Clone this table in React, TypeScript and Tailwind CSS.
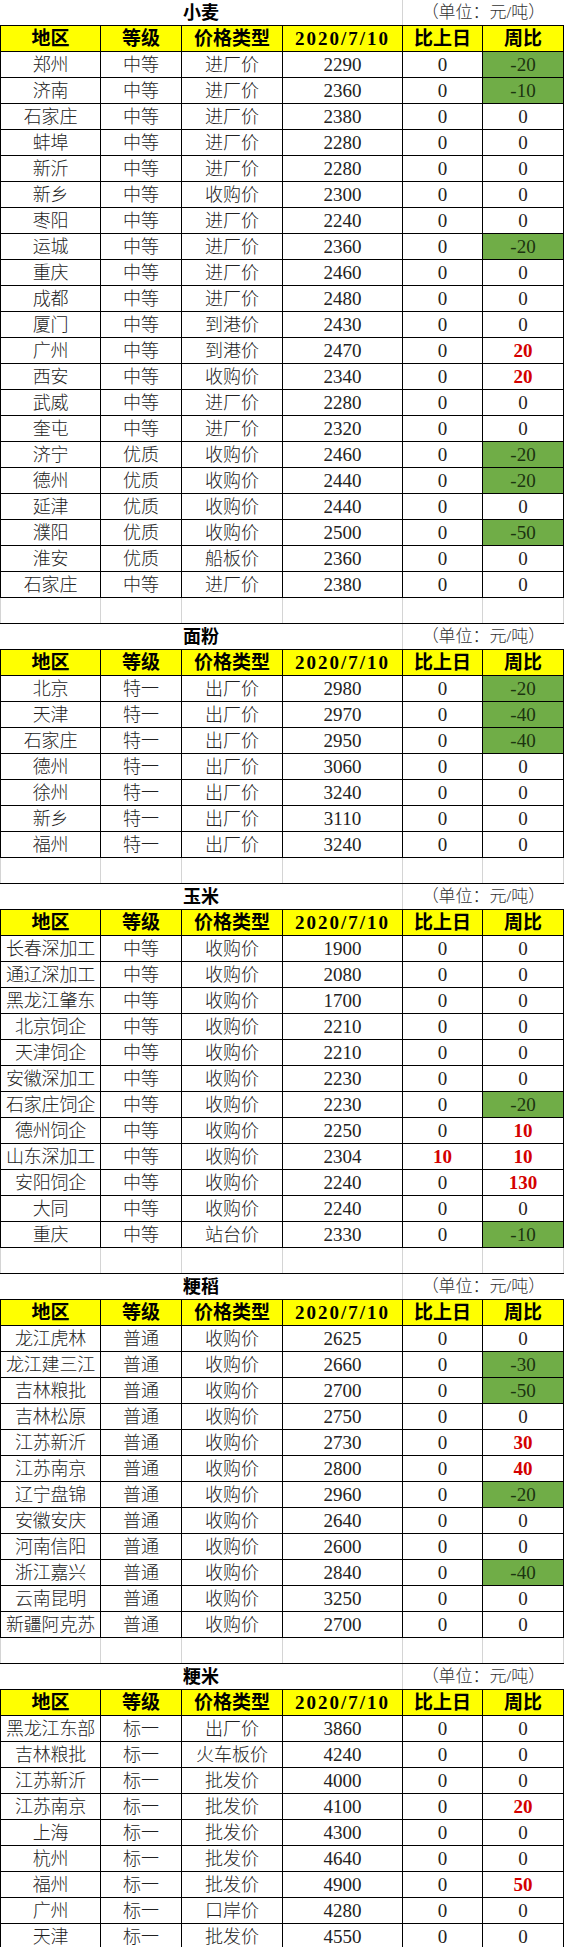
import React from "react";

type Row = [string, string, string, string, string, string];

type Section = { title: string; rows: Row[] };

const sections: Section[] = [
  {
    title: "小麦",
    rows: [
      ["郑州", "中等", "进厂价", "2290", "0", "-20"],
      ["济南", "中等", "进厂价", "2360", "0", "-10"],
      ["石家庄", "中等", "进厂价", "2380", "0", "0"],
      ["蚌埠", "中等", "进厂价", "2280", "0", "0"],
      ["新沂", "中等", "进厂价", "2280", "0", "0"],
      ["新乡", "中等", "收购价", "2300", "0", "0"],
      ["枣阳", "中等", "进厂价", "2240", "0", "0"],
      ["运城", "中等", "进厂价", "2360", "0", "-20"],
      ["重庆", "中等", "进厂价", "2460", "0", "0"],
      ["成都", "中等", "进厂价", "2480", "0", "0"],
      ["厦门", "中等", "到港价", "2430", "0", "0"],
      ["广州", "中等", "到港价", "2470", "0", "20"],
      ["西安", "中等", "收购价", "2340", "0", "20"],
      ["武威", "中等", "进厂价", "2280", "0", "0"],
      ["奎屯", "中等", "进厂价", "2320", "0", "0"],
      ["济宁", "优质", "收购价", "2460", "0", "-20"],
      ["德州", "优质", "收购价", "2440", "0", "-20"],
      ["延津", "优质", "收购价", "2440", "0", "0"],
      ["濮阳", "优质", "收购价", "2500", "0", "-50"],
      ["淮安", "优质", "船板价", "2360", "0", "0"],
      ["石家庄", "中等", "进厂价", "2380", "0", "0"],
    ],
  },
  {
    title: "面粉",
    rows: [
      ["北京", "特一", "出厂价", "2980", "0", "-20"],
      ["天津", "特一", "出厂价", "2970", "0", "-40"],
      ["石家庄", "特一", "出厂价", "2950", "0", "-40"],
      ["德州", "特一", "出厂价", "3060", "0", "0"],
      ["徐州", "特一", "出厂价", "3240", "0", "0"],
      ["新乡", "特一", "出厂价", "3110", "0", "0"],
      ["福州", "特一", "出厂价", "3240", "0", "0"],
    ],
  },
  {
    title: "玉米",
    rows: [
      ["长春深加工", "中等", "收购价", "1900", "0", "0"],
      ["通辽深加工", "中等", "收购价", "2080", "0", "0"],
      ["黑龙江肇东", "中等", "收购价", "1700", "0", "0"],
      ["北京饲企", "中等", "收购价", "2210", "0", "0"],
      ["天津饲企", "中等", "收购价", "2210", "0", "0"],
      ["安徽深加工", "中等", "收购价", "2230", "0", "0"],
      ["石家庄饲企", "中等", "收购价", "2230", "0", "-20"],
      ["德州饲企", "中等", "收购价", "2250", "0", "10"],
      ["山东深加工", "中等", "收购价", "2304", "10", "10"],
      ["安阳饲企", "中等", "收购价", "2240", "0", "130"],
      ["大同", "中等", "收购价", "2240", "0", "0"],
      ["重庆", "中等", "站台价", "2330", "0", "-10"],
    ],
  },
  {
    title: "粳稻",
    rows: [
      ["龙江虎林", "普通", "收购价", "2625", "0", "0"],
      ["龙江建三江", "普通", "收购价", "2660", "0", "-30"],
      ["吉林粮批", "普通", "收购价", "2700", "0", "-50"],
      ["吉林松原", "普通", "收购价", "2750", "0", "0"],
      ["江苏新沂", "普通", "收购价", "2730", "0", "30"],
      ["江苏南京", "普通", "收购价", "2800", "0", "40"],
      ["辽宁盘锦", "普通", "收购价", "2960", "0", "-20"],
      ["安徽安庆", "普通", "收购价", "2640", "0", "0"],
      ["河南信阳", "普通", "收购价", "2600", "0", "0"],
      ["浙江嘉兴", "普通", "收购价", "2840", "0", "-40"],
      ["云南昆明", "普通", "收购价", "3250", "0", "0"],
      ["新疆阿克苏", "普通", "收购价", "2700", "0", "0"],
    ],
  },
  {
    title: "粳米",
    rows: [
      ["黑龙江东部", "标一", "出厂价", "3860", "0", "0"],
      ["吉林粮批", "标一", "火车板价", "4240", "0", "0"],
      ["江苏新沂", "标一", "批发价", "4000", "0", "0"],
      ["江苏南京", "标一", "批发价", "4100", "0", "20"],
      ["上海", "标一", "批发价", "4300", "0", "0"],
      ["杭州", "标一", "批发价", "4640", "0", "0"],
      ["福州", "标一", "批发价", "4900", "0", "50"],
      ["广州", "标一", "口岸价", "4280", "0", "0"],
      ["天津", "标一", "批发价", "4550", "0", "0"],
    ],
  },
];

const FONT = "font-['Liberation_Serif','Noto_Sans_CJK_SC',serif]";
const GRID = "grid grid-cols-[101px_81px_101px_120px_80px_81px] h-[26px]";

function ValueCell({ v }: { v: string }) {
  const n = Number(v);
  const base = "flex items-center justify-center border-b border-r border-black";
  if (n < 0) {
    return <div className={base + " bg-[#70ad47] text-[#1c3410] text-[19px]"}>{v}</div>;
  }
  if (n > 0) {
    return <div className={base + " text-[#d40000] font-bold text-[19px]"}>{v}</div>;
  }
  return <div className={base + " text-[#222] text-[19px]"}>{v}</div>;
}

function SectionBlock({ s, blank }: { s: Section; blank: boolean }) {
  const head = ["地区", "等级", "价格类型", "2020/7/10", "比上日", "周比"];
  return (
    <div>
      <div className="grid grid-cols-[403px_161px] h-[26px] border-b border-black">
        <div className="flex items-center justify-center border-r border-[#d4d4d4] font-bold text-[18px] text-black">
          {s.title}
        </div>
        <div className="flex items-center justify-center text-[17px] text-[#333] font-light">（单位：元/吨）</div>
      </div>
      <div className={GRID + " bg-[#ffff00]"}>
        {head.map((h, i) => (
          <div
            key={i}
            className={
              "flex items-center justify-center border-b border-r border-black font-bold text-black text-[19px] " +
              (i === 0 ? "border-l " : "") +
              (i === 3 ? "tracking-[2px]" : "")
            }
          >
            {h}
          </div>
        ))}
      </div>
      {s.rows.map((r, idx) => (
        <div key={idx} className={GRID + " font-light"}>
          <div className="flex items-center justify-center border-b border-r border-l border-black text-[18px] text-[#222] whitespace-nowrap tracking-[-0.2px]">
            {r[0]}
          </div>
          <div className="flex items-center justify-center border-b border-r border-black text-[18px] text-[#222]">
            {r[1]}
          </div>
          <div className="flex items-center justify-center border-b border-r border-black text-[18px] text-[#222]">
            {r[2]}
          </div>
          <div className="flex items-center justify-center border-b border-r border-black text-[19px] text-[#222]">
            {r[3]}
          </div>
          <ValueCell v={r[4]} />
          <ValueCell v={r[5]} />
        </div>
      ))}
      {blank && (
        <div className={GRID + " border-b border-black"}>
          {[0, 1, 2, 3, 4, 5].map((i) => (
            <div key={i} className={"border-r border-[#d4d4d4] " + (i === 0 ? "border-l" : "")} />
          ))}
        </div>
      )}
    </div>
  );
}

export default function App() {
  return (
    <div className={"w-[564px] bg-white leading-none " + FONT}>
      {sections.map((s, i) => (
        <SectionBlock key={i} s={s} blank={i < sections.length - 1} />
      ))}
    </div>
  );
}
